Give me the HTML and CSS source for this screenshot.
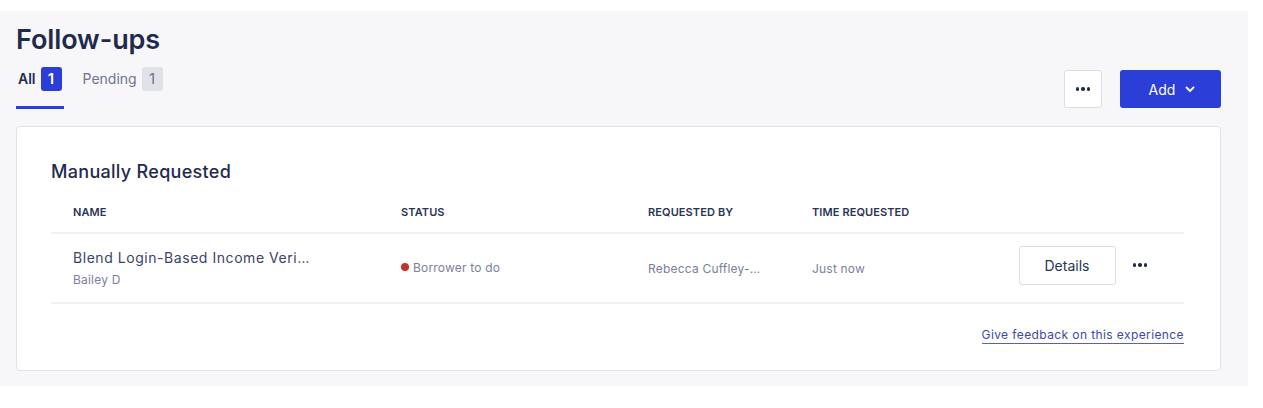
FILE: index.html
```html
<!DOCTYPE html>
<html>
<head>
<meta charset="utf-8">
<link rel="stylesheet" href="styles.css">
</head>
<body>
<div class="panel">
  <h1 class="title">Follow-ups</h1>
  <div class="header">
    <div class="tabs">
      <div class="tab active">All <span class="badge">1</span></div>
      <div class="tab">Pending <span class="badge gray">1</span></div>
    </div>
    <div class="actions">
      <button class="btn-more"><span class="dots"><i></i><i></i><i></i></span></button>
      <button class="btn-add">Add
        <svg width="12" height="12" viewBox="0 0 12 12"><path d="M2.5 4.5 L6 8 L9.5 4.5" fill="none" stroke="#fff" stroke-width="1.8" stroke-linecap="round" stroke-linejoin="round"/></svg>
      </button>
    </div>
  </div>
  <div class="card">
    <h2 class="section">Manually Requested</h2>
    <div class="table">
      <div class="row head">
        <div class="cell">NAME</div>
        <div class="cell">STATUS</div>
        <div class="cell">REQUESTED BY</div>
        <div class="cell">TIME REQUESTED</div>
        <div class="cell"></div>
      </div>
      <div class="row body">
        <div class="cell namecell">
          <div class="name">Blend Login-Based Income Veri…</div>
          <div class="sub">Bailey D</div>
        </div>
        <div class="cell status"><span class="dot"></span>Borrower to do</div>
        <div class="cell muted">Rebecca Cuffley-…</div>
        <div class="cell muted time">Just now</div>
        <div class="cell act">
          <button class="btn-details">Details</button>
          <span class="dots dark"><i></i><i></i><i></i></span>
        </div>
      </div>
    </div>
    <div class="feedback"><a href="#">Give feedback on this experience</a></div>
  </div>
</div>
</body>
</html>
```
FILE: styles.css
```css
* { box-sizing: border-box; }
html, body { margin: 0; padding: 0; background: #fff; }
body { font-family: Inter, "Noto Sans", sans-serif; color: #1f2a4d; }

.panel {
  margin-top: 11px;
  width: 1248px;
  height: 375px;
  background: #f7f7fa;
  padding: 12px 27px 0 16px;
}
.title {
  margin: 0;
  font-size: 27px;
  line-height: 34px;
  font-weight: 600;
  color: #1f2a4d;
  letter-spacing: -0.1px;
}
.header {
  display: flex;
  justify-content: space-between;
  align-items: flex-end;
  margin-top: 9px;
}
.tabs { display: flex; gap: 17px; }
.tab {
  display: flex;
  align-items: flex-start;
  gap: 5px;
  padding: 1px 2px 0 2px;
  font-size: 14px;
  line-height: 24px;
  color: #6e7391;
  border-bottom: 3px solid transparent;
  height: 43px;
}
.tab.active { color: #1f2a4d; font-weight: 600; border-bottom-color: #2b3ed8; }
.badge {
  display: inline-flex;
  align-items: center;
  justify-content: center;
  width: 21px;
  height: 24px;
  border-radius: 3px;
  background: #2b3ed8;
  color: #fff;
  font-size: 15px;
  font-weight: 600;
}
.badge.gray { background: #e1e2e7; color: #6e7391; font-weight: 400; }

.actions { display: flex; gap: 18px; margin-bottom: 1px; }
button { font-family: inherit; cursor: pointer; }
.btn-more {
  width: 38px; height: 38px;
  background: #fff;
  border: 1px solid #dcdde3;
  border-radius: 3px;
  display: flex; align-items: center; justify-content: center;
  padding: 0;
}
.dots { display: inline-flex; gap: 2px; }
.dots i { width: 3.5px; height: 3.5px; border-radius: 50%; background: #1f2a4d; display: block; }
.btn-add {
  width: 101px; height: 38px;
  background: #2b3ed8;
  border: none;
  border-radius: 3px;
  color: #fff;
  font-size: 14px;
  display: flex; align-items: center; justify-content: center; gap: 9px;
  padding: 0 0 0 4px;
}

.card {
  margin-top: 17px;
  width: 1205px;
  height: 245px;
  background: #fff;
  border: 1px solid #e1e2e8;
  border-radius: 4px;
  padding: 33px 36px 0 34px;
}
.section {
  margin: 0;
  font-size: 18px;
  line-height: 24px;
  font-weight: 500;
  color: #1f2a4d;
  letter-spacing: 0.3px;
}
.table { margin-top: 8px; }
.row {
  display: grid;
  grid-template-columns: 328px 247px 164px 1fr auto;
  border-bottom: 2px solid #f0f0f3;
  align-items: center;
}
.row.head { height: 42px; }
.row.body { height: 70px; }
.cell { padding-left: 22px; }
.head .cell {
  font-size: 11px;
  font-weight: 600;
  color: #2a3558;
  letter-spacing: 0.1px;
}
.namecell { margin-bottom: 2px; }
.name { font-size: 14px; color: #3a4468; letter-spacing: 0.55px; line-height: 20px; }
.sub { font-size: 12px; color: #7b809c; margin-top: 4px; letter-spacing: 0.2px; }
.status { display: flex; align-items: center; font-size: 12px; color: #7b809c; letter-spacing: 0.2px; margin-bottom: 2px; }
.dot { width: 8px; height: 8px; border-radius: 50%; background: #c8302c; margin-right: 4px; }
.muted { font-size: 12px; color: #7b809c; letter-spacing: 0.2px; }
.time { padding-top: 1px; }
.act { display: flex; align-items: center; justify-content: flex-end; gap: 17px; padding-right: 37px; margin-bottom: 6px; }
.btn-details {
  width: 97px; height: 39px;
  background: #fff;
  border: 1px solid #dcdde3;
  border-radius: 3px;
  font-size: 14px;
  color: #2a3558;
}
.dots.dark i { background: #1f2a4d; }
.feedback { text-align: right; margin-top: 19px; }
.feedback a {
  font-size: 12px;
  color: #3a48b0;
  text-decoration: none;
  border-bottom: 1.5px solid #5560c0;
  padding-bottom: 1px;
  letter-spacing: 0.4px;
}
```
